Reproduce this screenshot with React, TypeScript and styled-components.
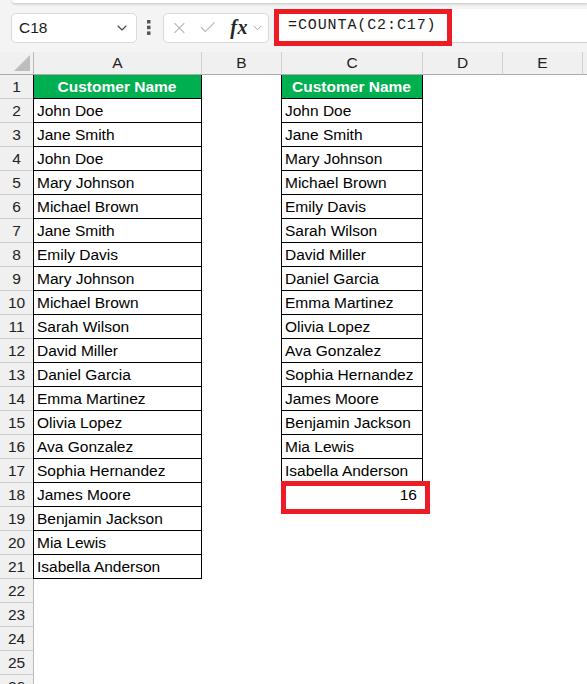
import React from 'react'
import styled, { createGlobalStyle } from 'styled-components'
import { X, Check, ChevronDown } from 'lucide-react'

const GlobalStyle = createGlobalStyle`
  html, body {
    margin: 0;
    padding: 0;
    background: #fff;
    overflow: hidden;
  }
  body {
    font-family: "Liberation Sans", Arial, sans-serif;
  }
`

const listA = [
  'John Doe', 'Jane Smith', 'John Doe', 'Mary Johnson', 'Michael Brown',
  'Jane Smith', 'Emily Davis', 'Mary Johnson', 'Michael Brown', 'Sarah Wilson',
  'David Miller', 'Daniel Garcia', 'Emma Martinez', 'Olivia Lopez', 'Ava Gonzalez',
  'Sophia Hernandez', 'James Moore', 'Benjamin Jackson', 'Mia Lewis', 'Isabella Anderson'
]

const listC = [
  'John Doe', 'Jane Smith', 'Mary Johnson', 'Michael Brown', 'Emily Davis',
  'Sarah Wilson', 'David Miller', 'Daniel Garcia', 'Emma Martinez', 'Olivia Lopez',
  'Ava Gonzalez', 'Sophia Hernandez', 'James Moore', 'Benjamin Jackson', 'Mia Lewis',
  'Isabella Anderson'
]

const columns = ['A', 'B', 'C', 'D', 'E', '']
const ROWS = 26

// top strip + formula bar
const Page = styled.div`
  width: 587px;
  height: 684px;
  overflow: hidden;
  background: #f4f4f4;
`

const Ribbon = styled.div`
  height: 3px;
  margin-left: 12px;
  background: #fff;
  border-bottom-left-radius: 6px;
  box-shadow: 0 1px 3px rgba(0, 0, 0, 0.22);
`

const FormulaBar = styled.div`
  display: flex;
  align-items: center;
  height: 49px;
  padding: 0 0 0 11px;
  box-sizing: border-box;
`

const NameBox = styled.div`
  display: flex;
  align-items: center;
  justify-content: space-between;
  width: 126px;
  height: 30px;
  box-sizing: border-box;
  padding: 0 6px 0 7px;
  background: #fff;
  border: 1px solid #dadada;
  border-radius: 5px;
  font-size: 15.5px;
  color: #1a1a1a;
`

const Grip = styled.svg`
  margin: 0 12px 0 10px;
  flex-shrink: 0;
`

const ActionBox = styled.div`
  display: flex;
  align-items: center;
  width: 106px;
  height: 30px;
  box-sizing: border-box;
  padding: 0 4px 0 6px;
  background: #fff;
  border: 1px solid #dadada;
  border-radius: 5px;
  gap: 9px;
`

const Fx = styled.span`
  font-family: "Liberation Serif", "Times New Roman", serif;
  font-style: italic;
  font-weight: 700;
  font-size: 20px;
  color: #262626;
  margin-left: 4px;
  letter-spacing: 0.5px;
`

const FormulaField = styled.div`
  position: relative;
  flex: 1;
  height: 33px;
  margin-left: 5px;
  margin-top: -3px;
  display: flex;
  align-items: center;
  background: #fff;
  border-bottom: 1px solid #d0d0d0;
  padding-left: 14px;
  font-family: "Liberation Mono", "Courier New", monospace;
  font-size: 15px;
  letter-spacing: 0.9px;
  color: #1a1a1a;
`

const Highlight = styled.div<{ $top: number; $left: number; $w: number; $h: number }>`
  position: absolute;
  z-index: 5;
  top: ${p => p.$top}px;
  left: ${p => p.$left}px;
  width: ${p => p.$w}px;
  height: ${p => p.$h}px;
  box-sizing: border-box;
  border: 5px solid #ed1c24;
  pointer-events: none;
`

// sheet grid
const Sheet = styled.div`
  display: grid;
  grid-template-columns: 34px 168px 80px 141px 80px 80px 1fr;
  grid-template-rows: 23px;
  grid-auto-rows: 24px;
  background: #fff;
`

const Corner = styled.div`
  position: relative;
  background: #f0f0f0;
  border-right: 1px solid #b8b8b8;
  border-bottom: 1px solid #ababab;
`

const CornerMark = styled.div`
  position: absolute;
  right: 3px;
  bottom: 3px;
  width: 0;
  height: 0;
  border-left: 16px solid transparent;
  border-bottom: 16px solid #bdbdbd;
`

const ColHead = styled.div`
  display: flex;
  align-items: center;
  justify-content: center;
  background: #f0f0f0;
  border-right: 1px solid #d2d2d2;
  border-bottom: 1px solid #ababab;
  font-size: 15.5px;
  color: #222;
`

const RowHead = styled.div`
  display: flex;
  align-items: center;
  justify-content: center;
  background: #f0f0f0;
  border-right: 1px solid #b8b8b8;
  border-bottom: 1px solid #cdcdcd;
  font-size: 15.5px;
  color: #222;
`

const Cell = styled.div<{ $table?: boolean; $head?: boolean; $right?: boolean }>`
  position: relative;
  display: flex;
  align-items: center;
  justify-content: ${p => (p.$head ? 'center' : p.$right ? 'flex-end' : 'flex-start')};
  padding: 0 4px 0 3px;
  white-space: nowrap;
  font-size: 15.5px;
  font-weight: ${p => (p.$head ? 700 : 400)};
  color: ${p => (p.$head ? '#fff' : '#000')};
  background: ${p => (p.$head ? '#00b050' : '#fff')};
  border-right: 1px solid ${p => (p.$table ? '#000' : 'transparent')};
  border-bottom: 1px solid ${p => (p.$table ? '#000' : 'transparent')};
  box-shadow: ${p => (p.$table ? '-1px 0 0 #000' : 'none')};
`

const Count = styled.span`
  padding-right: 1px;
`

const cellFor = (col: number, row: number) => {
  if (col === 0 || col === 2) {
    const list = col === 0 ? listA : listC
    if (row === 1) return <Cell $table $head>Customer Name</Cell>
    const name = list[row - 2]
    if (name) return <Cell $table>{name}</Cell>
    if (col === 2 && row === 18) {
      return (
        <Cell $right>
          <Count>16</Count>
          <Highlight $top={-2} $left={-1} $w={149} $h={33} />
        </Cell>
      )
    }
  }
  return <Cell />
}

const App: React.FC = () => {
  const rows = Array.from({ length: ROWS }, (_, i) => i + 1)

  return (
    <Page>
      <GlobalStyle />
      <Ribbon />
      <FormulaBar>
        <NameBox>
          <span>C18</span>
          <ChevronDown size={16} color="#444" strokeWidth={1.6} />
        </NameBox>
        <Grip width="4" height="15" viewBox="0 0 4 15">
          <rect x="0" y="0" width="3.5" height="3.5" fill="#555" />
          <rect x="0" y="5.7" width="3.5" height="3.5" fill="#555" />
          <rect x="0" y="11.4" width="3.5" height="3.5" fill="#555" />
        </Grip>
        <ActionBox>
          <X size={20} color="#b4b4b4" strokeWidth={1.3} />
          <Check size={21} color="#b4b4b4" strokeWidth={1.3} />
          <Fx>fx</Fx>
          <ChevronDown size={14} color="#9a9a9a" strokeWidth={1.6} style={{ marginLeft: -6 }} />
        </ActionBox>
        <FormulaField>
          =COUNTA(C2:C17)
          <Highlight $top={0} $left={0} $w={178} $h={37} />
        </FormulaField>
      </FormulaBar>
      <Sheet>
        <Corner>
          <CornerMark />
        </Corner>
        {columns.map((c, i) => (
          <ColHead key={i}>{c}</ColHead>
        ))}
        {rows.map(r => (
          <React.Fragment key={r}>
            <RowHead>{r}</RowHead>
            {columns.map((_, ci) => (
              <React.Fragment key={ci}>{cellFor(ci, r)}</React.Fragment>
            ))}
          </React.Fragment>
        ))}
      </Sheet>
    </Page>
  )
}

export default App
